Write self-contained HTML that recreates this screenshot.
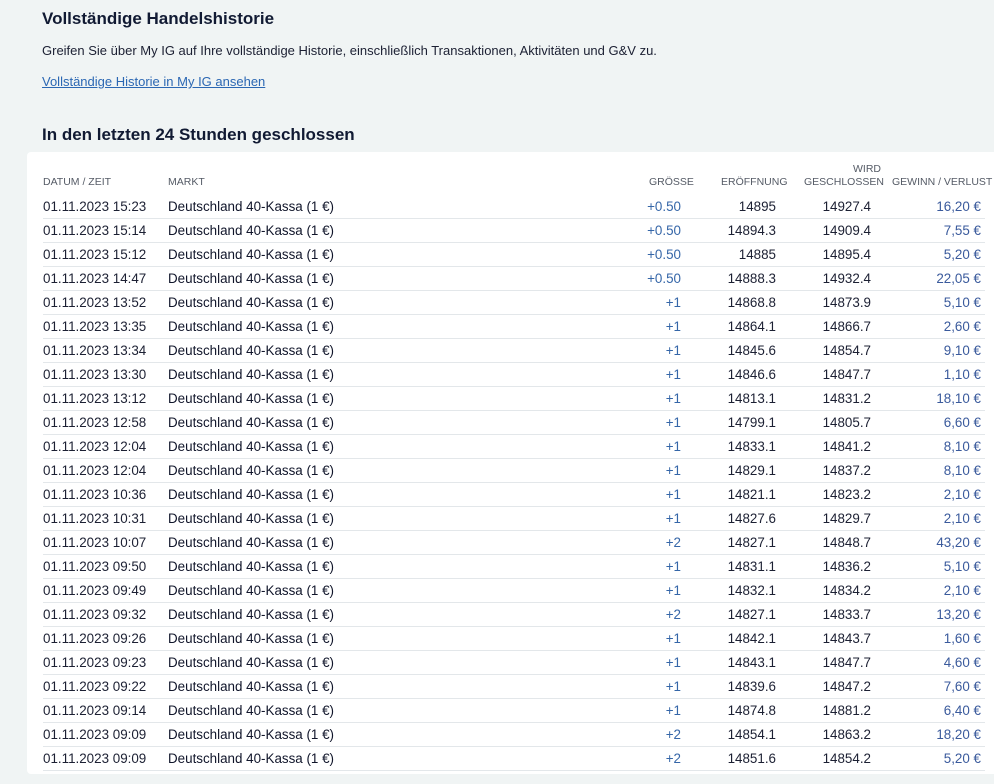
<!DOCTYPE html>
<html><head><meta charset="utf-8"><style>
body{margin:0;width:994px;height:784px;background:#f0f4f4;font-family:"Liberation Sans",sans-serif;color:#1c2033;overflow:hidden;position:relative}
h1{position:absolute;left:42px;top:9px;margin:0;font-size:17px;font-weight:bold;color:#111a33}
.p{position:absolute;left:42px;top:43px;font-size:13px}
a{position:absolute;left:42px;top:74px;font-size:13px;color:#2b67b3;text-decoration:underline}
h2{position:absolute;left:42px;top:125px;margin:0;font-size:17px;font-weight:bold;color:#111a33}
.card{position:absolute;left:27px;top:152px;width:980px;height:622px;background:#fff;border-radius:4px}
.hd{position:absolute;font-size:10.5px;color:#555b66;line-height:13px}
.row{position:absolute;left:43px;width:942px;height:24px;border-bottom:1px solid #e3e7ea;font-size:13.4px;line-height:24px}
.row span{position:absolute;top:1px}
.d{left:0}.m{left:125px;color:#10152a}
.s{right:304px;color:#3566a8}.o{right:209px}.c{right:114px}.g{right:4px;color:#3a5a9c}
</style></head><body>
<h1>Vollständige Handelshistorie</h1>
<div class="p">Greifen Sie über My IG auf Ihre vollständige Historie, einschließlich Transaktionen, Aktivitäten und G&amp;V zu.</div>
<a>Vollständige Historie in My IG ansehen</a>
<h2>In den letzten 24 Stunden geschlossen</h2>
<div class="card"></div>
<div class="hd" style="left:43px;top:176px">DATUM / ZEIT</div>
<div class="hd" style="left:168px;top:176px">MARKT</div>
<div class="hd" style="left:649px;top:176px">GRÖSSE</div>
<div class="hd" style="left:721px;top:176px">ERÖFFNUNG</div>
<div class="hd" style="left:804px;top:163px;text-align:right;width:77px">WIRD<br>GESCHLOSSEN</div>
<div class="hd" style="left:892px;top:176px">GEWINN / VERLUST</div>
<div id="rows"></div>
<script>
var d=[["15:23","+0.50","14895","14927.4","16,20"],["15:14","+0.50","14894.3","14909.4","7,55"],["15:12","+0.50","14885","14895.4","5,20"],["14:47","+0.50","14888.3","14932.4","22,05"],["13:52","+1","14868.8","14873.9","5,10"],["13:35","+1","14864.1","14866.7","2,60"],["13:34","+1","14845.6","14854.7","9,10"],["13:30","+1","14846.6","14847.7","1,10"],["13:12","+1","14813.1","14831.2","18,10"],["12:58","+1","14799.1","14805.7","6,60"],["12:04","+1","14833.1","14841.2","8,10"],["12:04","+1","14829.1","14837.2","8,10"],["10:36","+1","14821.1","14823.2","2,10"],["10:31","+1","14827.6","14829.7","2,10"],["10:07","+2","14827.1","14848.7","43,20"],["09:50","+1","14831.1","14836.2","5,10"],["09:49","+1","14832.1","14834.2","2,10"],["09:32","+2","14827.1","14833.7","13,20"],["09:26","+1","14842.1","14843.7","1,60"],["09:23","+1","14843.1","14847.7","4,60"],["09:22","+1","14839.6","14847.2","7,60"],["09:14","+1","14874.8","14881.2","6,40"],["09:09","+2","14854.1","14863.2","18,20"],["09:09","+2","14851.6","14854.2","5,20"]];
var h="";d.forEach(function(r,i){h+='<div class="row" style="top:'+(194+i*24)+'px"><span class="d">01.11.2023 '+r[0]+'</span><span class="m">Deutschland 40-Kassa (1 €)</span><span class="s">'+r[1]+'</span><span class="o">'+r[2]+'</span><span class="c">'+r[3]+'</span><span class="g">'+r[4]+' €</span></div>'});
document.getElementById("rows").innerHTML=h;
</script>
</body></html>
